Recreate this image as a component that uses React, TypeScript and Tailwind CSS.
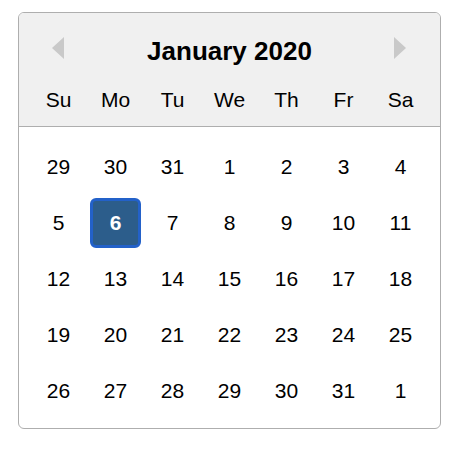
import React from "react";

const weeks: number[][] = [
  [29, 30, 31, 1, 2, 3, 4],
  [5, 6, 7, 8, 9, 10, 11],
  [12, 13, 14, 15, 16, 17, 18],
  [19, 20, 21, 22, 23, 24, 25],
  [26, 27, 28, 29, 30, 31, 1],
];
const names = ["Su", "Mo", "Tu", "We", "Th", "Fr", "Sa"];

export default function App() {
  return (
    <div className="w-[476px] h-[452px] bg-white pt-[12px] pl-[18px]" style={{ fontFamily: '"Liberation Sans", Arial, sans-serif' }}>
      <div className="w-[423px] h-[417px] border border-[#aeaeae] rounded-[6px] overflow-hidden flex flex-col">
        <div className="bg-[#f0f0f0] border-b border-[#aeaeae] px-[11px] pb-[1px]">
          <div className="relative h-[62px] flex items-center justify-center">
            <svg className="absolute left-[22px] top-[23px]" width="13" height="24" viewBox="0 0 13 24">
              <polygon points="0,12 12,1 12,23" fill="#c9c9c9" />
            </svg>
            <span className="text-[26px] leading-none font-bold text-black mt-[14px]">January 2020</span>
            <svg className="absolute right-[22px] top-[23px]" width="13" height="24" viewBox="0 0 13 24">
              <polygon points="12,12 0,1 0,23" fill="#c9c9c9" />
            </svg>
          </div>
          <div className="grid grid-cols-7">
            {names.map((n) => (
              <div key={n} className="m-[3px] w-[51px] h-[44px] flex items-center justify-center text-[21px] text-black">
                {n}
              </div>
            ))}
          </div>
        </div>
        <div className="px-[11px] pt-[12px]">
          {weeks.map((w, i) => (
            <div key={i} className="grid grid-cols-7">
              {w.map((d, j) => {
                const sel = i === 1 && j === 1;
                return (
                  <div
                    key={j}
                    className={
                      sel
                        ? "m-[3px] w-[51px] h-[50px] flex items-center justify-center text-[21px] text-white font-bold bg-[#2c5d8b] border-[3px] border-[#2361c9] rounded-[6px]"
                        : "m-[3px] w-[51px] h-[50px] flex items-center justify-center text-[21px] text-black"
                    }
                  >
                    {d}
                  </div>
                );
              })}
            </div>
          ))}
        </div>
      </div>
    </div>
  );
}
